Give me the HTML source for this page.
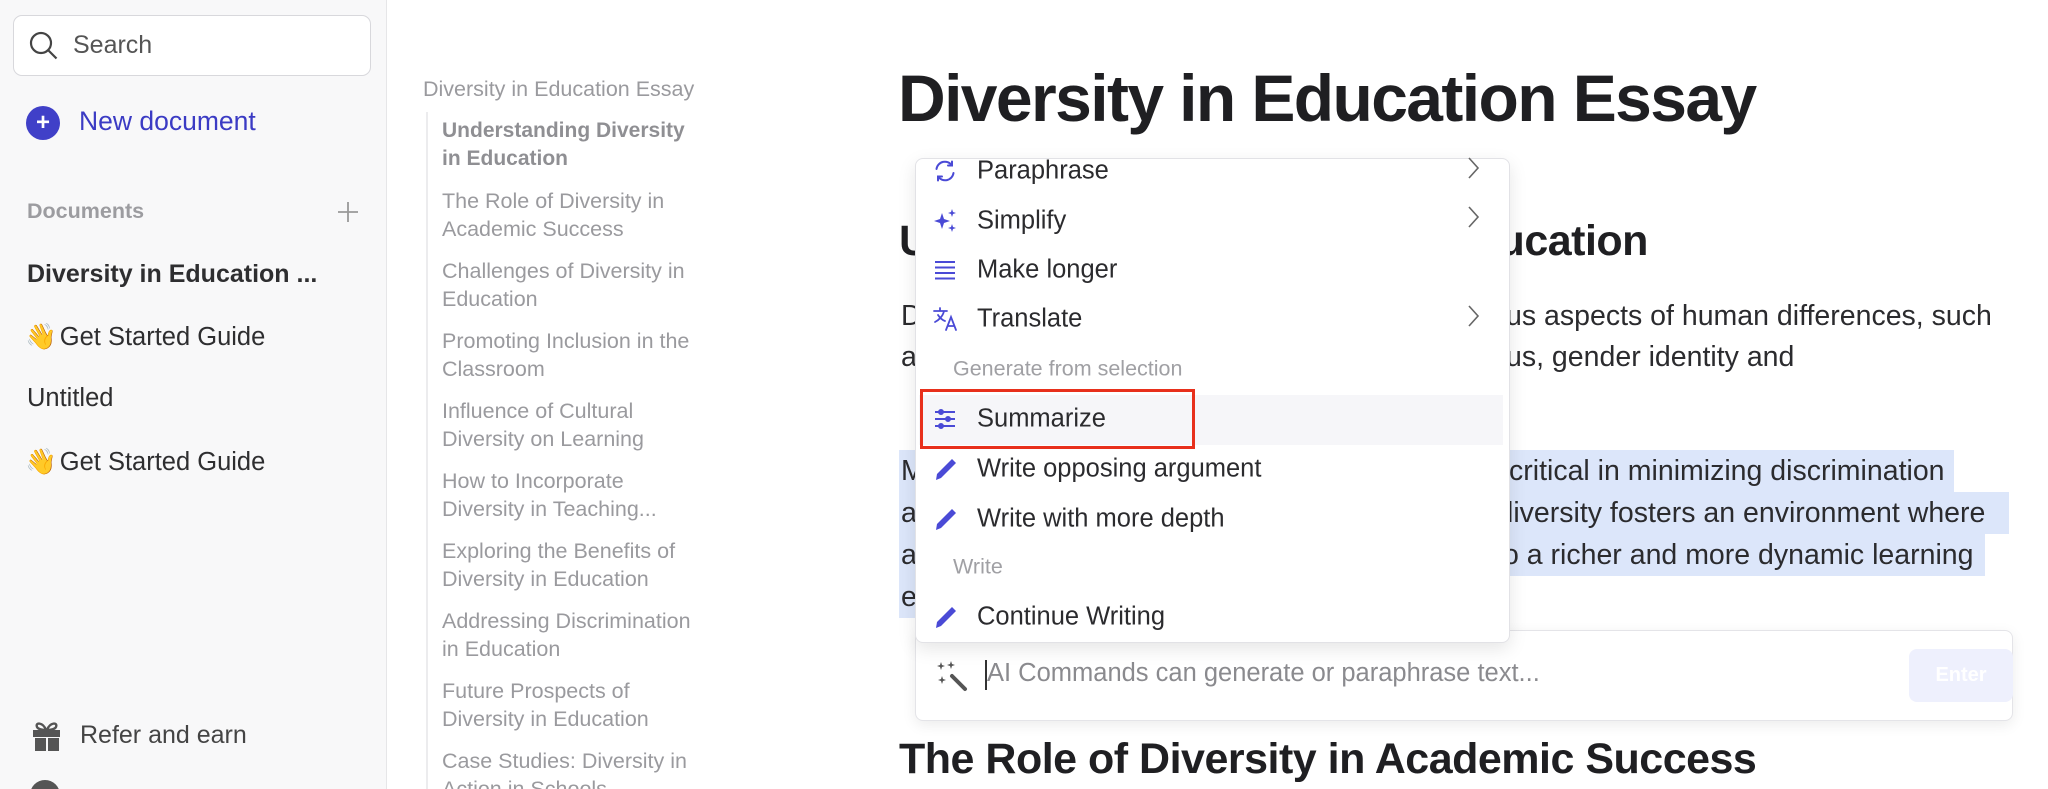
<!DOCTYPE html>
<html style="width:2048px;height:789px;overflow:hidden"><head><meta charset="utf-8">
<style>
*{margin:0;padding:0;box-sizing:border-box}
body{width:2048px;height:789px;overflow:hidden;background:#fff;font-family:"Liberation Sans",sans-serif;position:relative;color:#2b2b2e}
.abs{position:absolute;white-space:nowrap}
#side{position:absolute;left:0;top:0;width:387px;height:789px;background:#f8f8f9;border-right:1px solid #e6e6e8;overflow:hidden}
.search{position:absolute;left:13px;top:15px;width:358px;height:61px;border:1.5px solid #d8d8dc;border-radius:9px;background:#fff}
.side-item{position:absolute;left:27px;font-size:25.5px;color:#2e2e30}
.toc{position:absolute;left:442px;font-size:21.5px;line-height:28px;color:#9a9a9e;width:300px;white-space:nowrap}
.mi{position:absolute;left:977px;font-size:25.5px;color:#2b2b2e;transform:translateY(-50%);white-space:nowrap}
.ic{position:absolute;left:933px;transform:translateY(-50%)}
.hd{position:absolute;left:953px;font-size:21.5px;color:#a0a0a4;transform:translateY(-50%);white-space:nowrap}
.chev{position:absolute;left:1466px;transform:translateY(-50%)}
.p{position:absolute;font-size:28.5px;color:#2b2b2e;line-height:42px;white-space:nowrap}
.hl{background:#dce6fa}
#clip{position:absolute;left:0;top:0;width:2048px;height:789px;overflow:hidden}
</style></head><body><div id="clip">

<div id="side">
  <div class="search">
    <svg class="abs" style="left:14px;top:14px" width="32" height="32" viewBox="0 0 32 32" fill="none" stroke="#444" stroke-width="2.2"><circle cx="13" cy="13" r="10"/><path d="M20.5 20.5l8 8"/></svg>
    <div class="abs" style="left:59px;top:15px;font-size:25px;color:#555">Search</div>
  </div>
  <div class="abs" style="left:26px;top:106px;width:34px;height:34px;border-radius:50%;background:#4040c8"></div>
  <div class="abs" style="left:26px;top:106px;width:34px;height:34px;color:#fff;font-size:24px;line-height:33px;text-align:center;font-weight:bold">+</div>
  <div class="abs" style="left:79px;top:106px;font-size:26.5px;color:#3b3bc4">New document</div>
  <div class="abs" style="left:27px;top:199px;font-size:21.5px;color:#9c9ca0;font-weight:bold">Documents</div>
  <svg class="abs" style="left:337px;top:201px" width="22" height="22" viewBox="0 0 22 22" stroke="#999" stroke-width="1.8"><path d="M11 1v20M1 11h20"/></svg>
  <div class="side-item" style="top:260px;font-weight:bold;font-size:25px">Diversity in Education ...</div>
  <div class="side-item" style="top:322px;left:25px">👋<span style="margin-left:3px">Get Started Guide</span></div>
  <div class="side-item" style="top:384px">Untitled</div>
  <div class="side-item" style="top:447px;left:25px">👋<span style="margin-left:3px">Get Started Guide</span></div>
  <svg class="abs" style="left:30px;top:719px" width="33" height="33" viewBox="0 0 33 33" fill="#555"><path d="M3 11h27v7H3zM5 19h11v13H5zM18 19h11v13H18z"/><path d="M16 11c-3-8-11-8-9-3 1 2 5 3 9 3zM17 11c3-8 11-8 9-3-1 2-5 3-9 3z" fill="none" stroke="#555" stroke-width="2.4"/></svg>
  <div class="abs" style="left:80px;top:721px;font-size:25px;color:#444">Refer and earn</div>
  <div class="abs" style="left:30px;top:780px;width:30px;height:30px;border-radius:50%;background:#555"></div>
</div>

<!-- TOC -->
<div class="abs" style="left:423px;top:77px;font-size:21.5px;color:#9a9a9e">Diversity in Education Essay</div>
<div class="abs" style="left:426px;top:112px;width:2px;height:690px;background:#ececee"></div>
<div class="toc" style="top:117px;font-weight:bold;color:#8f8f93;font-size:21px">Understanding Diversity<br>in Education</div>
<div class="toc" style="top:187px">The Role of Diversity in<br>Academic Success</div>
<div class="toc" style="top:257px">Challenges of Diversity in<br>Education</div>
<div class="toc" style="top:327px">Promoting Inclusion in the<br>Classroom</div>
<div class="toc" style="top:397px">Influence of Cultural<br>Diversity on Learning</div>
<div class="toc" style="top:467px">How to Incorporate<br>Diversity in Teaching...</div>
<div class="toc" style="top:537px">Exploring the Benefits of<br>Diversity in Education</div>
<div class="toc" style="top:607px">Addressing Discrimination<br>in Education</div>
<div class="toc" style="top:677px">Future Prospects of<br>Diversity in Education</div>
<div class="toc" style="top:747px">Case Studies: Diversity in<br>Action in Schools</div>

<!-- Main -->
<div class="abs" style="left:898px;top:60px;font-size:66px;font-weight:bold;color:#1f1f22;letter-spacing:-1.6px">Diversity in Education Essay</div>
<div class="abs" style="left:899px;top:217px;font-size:43px;font-weight:bold;color:#1f1f22;letter-spacing:-0.5px">Understanding Diversity in Education</div>
<div class="p" style="left:901px;top:295px">D</div>
<div class="p" style="left:1506px;top:295px">us aspects of human differences, such</div>
<div class="p" style="left:901px;top:336px">a</div>
<div class="p" style="left:1506px;top:336px">us, gender identity and</div>

<div class="abs hl" style="left:899px;top:450px;width:1055px;height:42px"></div>
<div class="abs hl" style="left:899px;top:492px;width:1110px;height:42px"></div>
<div class="abs hl" style="left:899px;top:534px;width:1086px;height:42px"></div>
<div class="abs hl" style="left:899px;top:576px;width:20px;height:42px"></div>
<div class="p" style="left:901px;top:450px">M</div>
<div class="p" style="left:1509px;top:450px">critical in minimizing discrimination</div>
<div class="p" style="left:901px;top:492px">a</div>
<div class="p" style="left:1507px;top:492px">liversity fosters an environment where</div>
<div class="p" style="left:901px;top:534px">a</div>
<div class="p" style="left:1503px;top:534px">o a richer and more dynamic learning</div>
<div class="p" style="left:901px;top:576px">e</div>

<div class="abs" style="left:899px;top:735px;font-size:43px;font-weight:bold;color:#1f1f22;letter-spacing:-0.5px">The Role of Diversity in Academic Success</div>

<!-- AI bar -->
<div class="abs" style="left:915px;top:630px;width:1098px;height:91px;background:#fff;border:1px solid #e4e4e8;border-radius:8px;box-shadow:0 4px 14px rgba(0,0,0,0.08)"></div>
<svg class="abs" style="left:936px;top:660px" width="32" height="32" viewBox="0 0 32 32" fill="#555"><path d="M5 2l1 3 3 1-3 1-1 3-1-3-3-1 3-1zM15 1l1 3 3 1-3 1-1 3-1-3-3-1 3-1zM6 16l1 3 3 1-3 1-1 3-1-3-3-1 3-1z"/><path d="M16 16l13 13" stroke="#555" stroke-width="4" stroke-linecap="round"/></svg>
<div class="abs" style="left:985px;top:660px;width:2px;height:30px;background:#333"></div>
<div class="abs" style="left:987px;top:659px;font-size:25.5px;color:#8a8a8e">AI Commands can generate or paraphrase text...</div>
<div class="abs" style="left:1909px;top:649px;width:104px;height:53px;border-radius:8px;background:#eef0fd;color:#fff;font-size:20px;text-align:center;line-height:53px;font-weight:bold">Enter</div>

<!-- Menu -->
<div class="abs" style="left:915px;top:158px;width:595px;height:485px;background:#fff;border:1px solid #e2e2e6;border-radius:8px;box-shadow:0 6px 18px rgba(0,0,0,0.10)"></div>
<div class="abs" style="left:919px;top:395px;width:584px;height:50px;background:#f6f6f9"></div>

<svg class="ic" style="top:171px" width="24" height="24" viewBox="0 0 24 24" fill="none" stroke="#4a4ad6" stroke-width="2" stroke-linecap="round"><path d="M3.5 10a8.5 8.5 0 0 1 15.5-3.5M20.5 14a8.5 8.5 0 0 1-15.5 3.5M19 2.5v4h-4M5 21.5v-4h4"/></svg>
<div class="mi" style="top:171px">Paraphrase</div>
<svg class="ic" style="top:221px" width="26" height="26" viewBox="0 0 26 26" fill="#4a4ad6"><path d="M9 5l2 6 6 2-6 2-2 6-2-6-6-2 6-2zM19 1l1 3 3 1-3 1-1 3-1-3-3-1 3-1zM19 16l1 3 3 1-3 1-1 3-1-3-3-1 3-1z"/></svg>
<div class="mi" style="top:221px">Simplify</div>
<svg class="ic" style="top:270px" width="24" height="24" viewBox="0 0 24 24" stroke="#4a4ad6" stroke-width="2"><path d="M2 4h20M2 9.5h20M2 15h20M2 20.5h20"/></svg>
<div class="mi" style="top:270px">Make longer</div>
<svg class="ic" style="top:319px" width="26" height="26" viewBox="0 0 26 26" fill="none" stroke="#4a4ad6" stroke-width="1.8" stroke-linecap="round"><path d="M1 5h13M7 2v3M11 5c-1 5-5 9-9 11M5 9c2 3 4 5 7 6M13 24l5-13 5 13M15 20h6"/></svg>
<div class="mi" style="top:319px">Translate</div>
<div class="hd" style="top:369px">Generate from selection</div>
<svg class="ic" style="top:419px" width="24" height="24" viewBox="0 0 24 24" stroke="#4a4ad6" stroke-width="2"><path d="M2 5h20M2 12h20M2 19h20"/><circle cx="8" cy="5" r="2" fill="#4a4ad6"/><circle cx="15" cy="12" r="2" fill="#4a4ad6"/><circle cx="8" cy="19" r="2" fill="#4a4ad6"/></svg>
<div class="mi" style="top:419px">Summarize</div>
<svg class="ic" style="top:469px" width="26" height="26" viewBox="0 0 26 26"><path d="M3 24l1-6L19 3l4 4L8 22z" fill="#4a4ad6"/></svg>
<div class="mi" style="top:469px">Write opposing argument</div>
<svg class="ic" style="top:519px" width="26" height="26" viewBox="0 0 26 26"><path d="M3 24l1-6L19 3l4 4L8 22z" fill="#4a4ad6"/></svg>
<div class="mi" style="top:519px">Write with more depth</div>
<div class="hd" style="top:567px">Write</div>
<svg class="ic" style="top:617px" width="26" height="26" viewBox="0 0 26 26"><path d="M3 24l1-6L19 3l4 4L8 22z" fill="#4a4ad6"/></svg>
<div class="mi" style="top:617px">Continue Writing</div>

<svg class="chev" style="top:168px" width="14" height="24" viewBox="0 0 14 24" fill="none" stroke="#666" stroke-width="1.6"><path d="M3 2l9 10-9 10"/></svg>
<svg class="chev" style="top:217px" width="14" height="24" viewBox="0 0 14 24" fill="none" stroke="#666" stroke-width="1.6"><path d="M3 2l9 10-9 10"/></svg>
<svg class="chev" style="top:316px" width="14" height="24" viewBox="0 0 14 24" fill="none" stroke="#666" stroke-width="1.6"><path d="M3 2l9 10-9 10"/></svg>

<div class="abs" style="left:920px;top:389px;width:275px;height:60px;border:3px solid #e8301c"></div>
</div></body></html>
